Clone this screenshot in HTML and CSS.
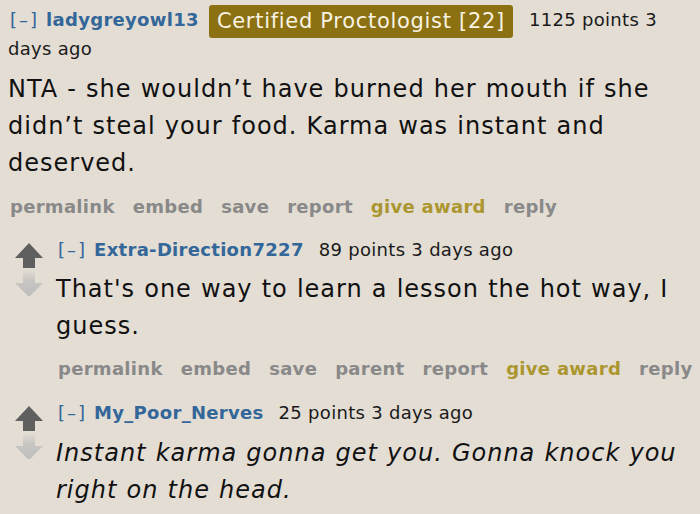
FILE: index.html
```
<!DOCTYPE html>
<html>
<head>
<meta charset="utf-8">
<link rel="stylesheet" href="styles.css">
</head>
<body>
<div class="comment top">
  <div class="entry">
    <p class="tagline"><span class="expand">[–]</span> <a class="author">ladygreyowl13</a> <span class="flair">Certified Proctologist [22]</span> <span class="score">1125 points 3 days ago</span></p>
    <p class="body">NTA - she wouldn’t have burned her mouth if she didn’t steal your food. Karma was instant and deserved.</p>
    <ul class="buttons">
      <li>permalink</li><li>embed</li><li>save</li><li>report</li><li class="gold">give award</li><li>reply</li>
    </ul>
  </div>
</div>
<div class="comment child">
  <div class="votes">
    <svg class="arrow" viewBox="0 0 28 26"><path d="M14 0 L28 15 L20 15 L20 25 L8 25 L8 15 L0 15 Z" fill="#5f5f5f"/></svg>
    <svg class="arrow" viewBox="0 0 28 26"><defs><linearGradient id="g1" x1="0" y1="0" x2="0" y2="1"><stop offset="0" stop-color="#e2dcd3"/><stop offset="0.4" stop-color="#c8c6c2"/><stop offset="1" stop-color="#bdbdbd"/></linearGradient></defs><path d="M14 27 L28 13 L20 13 L20 0 L8 0 L8 13 L0 13 Z" fill="url(#g1)"/></svg>
  </div>
  <div class="entry">
    <p class="tagline"><span class="expand">[–]</span> <a class="author">Extra-Direction7227</a> <span class="score">89 points 3 days ago</span></p>
    <p class="body">That's one way to learn a lesson the hot way, I guess.</p>
    <ul class="buttons">
      <li>permalink</li><li>embed</li><li>save</li><li>parent</li><li>report</li><li class="gold">give award</li><li>reply</li>
    </ul>
  </div>
</div>
<div class="comment child last">
  <div class="votes">
    <svg class="arrow" viewBox="0 0 28 26"><path d="M14 0 L28 15 L20 15 L20 25 L8 25 L8 15 L0 15 Z" fill="#5f5f5f"/></svg>
    <svg class="arrow" viewBox="0 0 28 26"><defs><linearGradient id="g2" x1="0" y1="0" x2="0" y2="1"><stop offset="0" stop-color="#e2dcd3"/><stop offset="0.4" stop-color="#c8c6c2"/><stop offset="1" stop-color="#bdbdbd"/></linearGradient></defs><path d="M14 27 L28 13 L20 13 L20 0 L8 0 L8 13 L0 13 Z" fill="url(#g2)"/></svg>
  </div>
  <div class="entry">
    <p class="tagline"><span class="expand">[–]</span> <a class="author">My_Poor_Nerves</a> <span class="score">25 points 3 days ago</span></p>
    <p class="body italic">Instant karma gonna get you. Gonna knock you right on the head.</p>
  </div>
</div>
</body>
</html>
```
FILE: styles.css
```
html, body {
  margin: 0;
  padding: 0;
  background: #e3ddd4;
}
body {
  font-family: "DejaVu Sans", Verdana, sans-serif;
  color: #111;
  width: 700px;
  height: 514px;
  overflow: hidden;
}
p, ul { margin: 0; padding: 0; }
.comment {
  display: flex;
}
.top {
  padding: 6px 0 0 8px;
}
.entry {
  flex: 1;
  min-width: 0;
}
.tagline {
  font-size: 18px;
  line-height: 28px;
  letter-spacing: 0.3px;
  color: #1a1a1a;
}
.expand {
  color: #336699;
  margin-left: 2px;
  letter-spacing: 2px;
}
.author {
  color: #336699;
  font-weight: bold;
  margin-left: 1px;
}
.flair {
  display: inline-block;
  background: #8c7112;
  color: #f8f3e4;
  font-size: 21px;
  letter-spacing: 0.7px;
  line-height: 33px;
  padding: 0 8px 0 8px;
  border-radius: 3px;
  margin: -3px 1px -3px 4px;
  vertical-align: middle;
}
.score {
  color: #1a1a1a;
  margin-left: 9px;
}
.body {
  font-size: 24px;
  letter-spacing: 1px;
  word-spacing: 0.5px;
  line-height: 37px;
  margin-top: 8px;
  color: #111;
}
.italic { font-style: italic; }
.buttons {
  list-style: none;
  display: flex;
  gap: 18px;
  font-size: 18px;
  letter-spacing: 0.3px;
  font-weight: bold;
  color: #898989;
  line-height: 28px;
  margin: 11px 0 0 2px;
}
.buttons .gold { color: #ac962f; }
.child {
  padding-left: 15px;
  margin-top: 15px;
}
.child .body { margin-top: 7px; }
.child .buttons { margin-top: 10px; }
.last { margin-top: 16px; }
.last .body { margin-top: 8px; }
.votes {
  width: 41px;
  flex: none;
  display: flex;
  flex-direction: column;
  gap: 1px;
  padding-top: 7px;
}
.arrow {
  width: 28px;
  height: 26px;
}
```
